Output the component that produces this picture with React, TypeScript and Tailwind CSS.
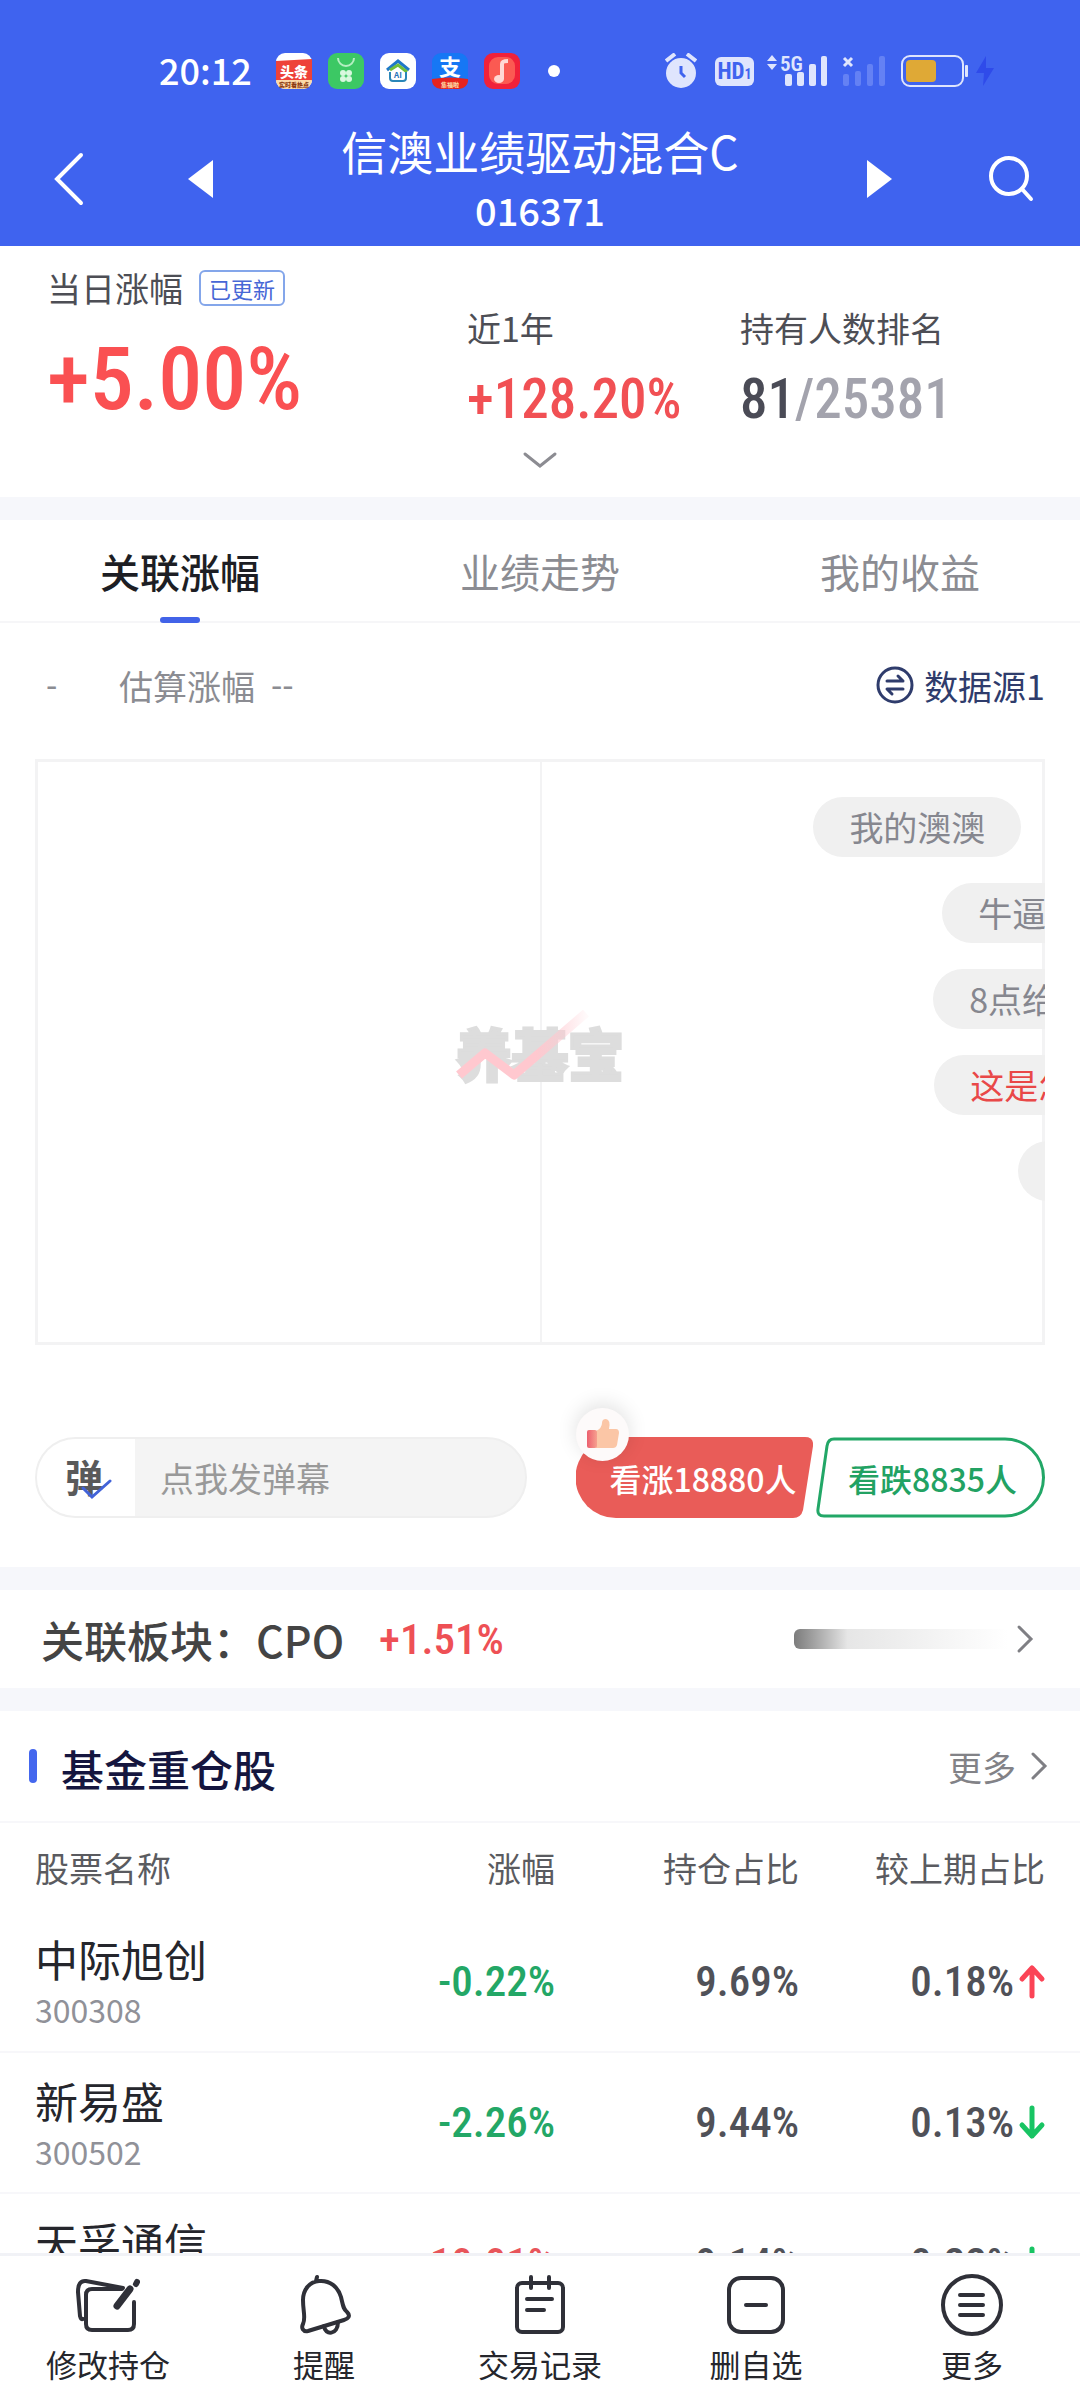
import React from 'react';

const NUM = "font-['Roboto_Condensed',Roboto,sans-serif] font-medium";

const STOCKS = [
  { name: '中际旭创', code: '300308', change: '-0.22%', ratio: '9.69%', diff: '0.18%', up: true },
  { name: '新易盛', code: '300502', change: '-2.26%', ratio: '9.44%', diff: '0.13%', up: false },
  { name: '天孚通信', code: '300394', change: '10.01%', ratio: '9.14%', diff: '0.22%', up: false },
];

// left is the bubble's current drift position, in percent of the chart width
const DANMAKU = [
  { text: '我的澳澳', left: 77 },
  { text: '牛逼', left: 89.8 },
  { text: '8点给我', left: 88.9 },
  { text: '这是怎么了', left: 89 },
  { text: '加油', left: 97.3 },
];

const Chevron = () => (
  <svg width="18" height="30" viewBox="0 0 18 30" fill="none" stroke="#7f7f84" strokeWidth="3" strokeLinecap="round">
    <path d="m3 3 12 12L3 27" />
  </svg>
);

const Arrow = ({ up }: { up: boolean }) => (
  <svg width="28" height="36" viewBox="0 0 28 36" fill="none" stroke={up ? '#fb4456' : '#18c463'} strokeWidth="5" strokeLinecap="round" strokeLinejoin="round">
    {up ? <path d="M14 33V5M4 16 14 5l10 11" /> : <path d="M14 3v28M4 20l10 11 10-11" />}
  </svg>
);

const StatusBar = () => (
  <div className="flex items-center justify-between pr-[84px] pl-[159px] pt-[53px]">
    <div className="flex h-9 items-center gap-4">
      <span className="mr-2 pb-1 text-[36px] leading-9 font-medium">20:12</span>
      <svg width="36" height="36" viewBox="0 0 36 36">
        <rect width="36" height="36" rx="9" fill="#fff" />
        <path d="M0 8 36 6v22H0z" fill="#ee4239" />
        <path d="M0 27h36a9 9 0 0 1-9 9H9a9 9 0 0 1-9-9z" fill="#fbd9a8" />
        <text x="18" y="24" fontSize="14" fontWeight="900" fill="#fff" textAnchor="middle">头条</text>
        <text x="18" y="34" fontSize="6" fontWeight="900" fill="#8c3a10" textAnchor="middle">实时看热点</text>
      </svg>
      <svg width="36" height="36" viewBox="0 0 36 36">
        <rect width="36" height="36" rx="9" fill="#3cc864" />
        <path d="M10 5a8 8 0 0 0 16 0" fill="none" stroke="#b4efc2" strokeWidth="2" />
        <g fill="#d8f8de">
          <circle cx="15" cy="20" r="3" />
          <circle cx="21" cy="20" r="3" />
          <circle cx="15" cy="26" r="3" />
          <circle cx="21" cy="26" r="3" />
        </g>
      </svg>
      <svg width="36" height="36" viewBox="0 0 36 36" fill="none">
        <rect width="36" height="36" rx="9" fill="#fff" />
        <path d="m7 17 11-9 11 9" stroke="#1f78c8" strokeWidth="3" />
        <path d="m10 17 8-5 9 7" stroke="#6fbf3b" strokeWidth="3" />
        <path d="M10 19v6q0 3 3 3h10q3 0 3-3v-6" stroke="#2a86b8" strokeWidth="2" />
        <text x="18" y="25" fontSize="8" fontWeight="700" fill="#2a72b8" textAnchor="middle">AI</text>
      </svg>
      <svg width="36" height="36" viewBox="0 0 36 36">
        <rect width="36" height="36" rx="9" fill="#1677f5" />
        <path d="M0 26q18-3 36 0a9 9 0 0 1-9 10H9a9 9 0 0 1-9-10z" fill="#e5231f" />
        <text x="18" y="22" fontSize="22" fontWeight="700" fill="#fff" textAnchor="middle">支</text>
        <text x="18" y="34" fontSize="6" fontWeight="700" fill="#ffe2b0" textAnchor="middle">集福啦</text>
      </svg>
      <svg width="36" height="36" viewBox="0 0 36 36">
        <rect width="36" height="36" rx="9" fill="#f0213a" />
        <rect x="5" y="4" width="26" height="27" rx="9" fill="#fb5a52" />
        <ellipse cx="15" cy="26" rx="5" ry="4" fill="#ffd8d4" />
        <path d="M18 26V11q0-3 6-3" fill="none" stroke="#ffd8d4" strokeWidth="4" />
      </svg>
      <span className="ml-3 size-3 rounded-full bg-white" />
    </div>
    <div className="flex items-center text-[#dfe5fd]">
      <svg width="32" height="36" viewBox="0 0 32 36">
        <circle cx="16" cy="20" r="15" fill="#dfe5fd" />
        <path d="m1 8 9-7M31 8l-9-7" stroke="#dfe5fd" strokeWidth="4" />
        <path d="M16 13v7l4 4" fill="none" stroke="#3f63ef" strokeWidth="3" />
      </svg>
      <span className="ml-[18px] w-[39px] rounded-md bg-[#dfe5fd] text-center font-['Roboto_Condensed',Roboto,sans-serif] text-[23px] leading-[29px] font-bold text-[#3f63ef]">
        HD<span className="text-sm">1</span>
      </span>
      <svg className="ml-3" width="62" height="36" viewBox="0 0 62 36" fill="#dfe5fd">
        <path d="m6 2 5 6H1zM6 17l5-6H1z" />
        <rect x="19" y="21" width="7" height="12" rx="2" />
        <rect x="31" y="19" width="7" height="14" rx="2" />
        <rect x="43" y="11" width="7" height="22" rx="2" />
        <rect x="55" y="3" width="6" height="30" rx="2" />
        <text x="14" y="18" fontSize="21" fontWeight="600" fontFamily="Roboto Condensed, Roboto">5G</text>
      </svg>
      <svg className="ml-[14px]" width="44" height="36" viewBox="0 0 44 36">
        <path d="m2 5 8 8m0-8-8 8" stroke="#dfe5fd" strokeWidth="3" />
        <g fill="#6481f4">
          <rect x="1" y="21" width="6" height="12" rx="2" />
          <rect x="13" y="18" width="6" height="15" rx="2" />
          <rect x="25" y="11" width="6" height="22" rx="2" />
          <rect x="37" y="3" width="6" height="30" rx="2" />
        </g>
      </svg>
      <svg className="ml-[14px]" width="96" height="36" viewBox="0 0 96 36">
        <rect x="2" y="3" width="61" height="30" rx="8" fill="none" stroke="#dfe5fd" strokeWidth="2" />
        <rect x="6" y="7" width="30" height="22" rx="4" fill="#dfa936" />
        <rect x="65" y="12" width="3" height="12" rx="1" fill="#dfe5fd" />
        <path d="M86 3 76 20h8l-1 13 11-18h-8z" fill="#2f4bea" />
      </svg>
    </div>
  </div>
);

const Header = () => (
  <header className="h-[246px] shrink-0 bg-[#3f63ef] text-white">
    <StatusBar />
    <div className="flex items-center justify-between px-[46px] pt-[31px]">
      <div className="flex items-center gap-[94px]">
        <button aria-label="返回">
          <svg width="46" height="60" viewBox="0 0 46 60" fill="none" stroke="#fff" strokeWidth="4" strokeLinecap="round">
            <path d="M35 5 11 29l24 24" />
          </svg>
        </button>
        <button aria-label="上一只">
          <svg width="30" height="40" viewBox="0 0 30 40" fill="#fff"><path d="M27 0v38L2 19z" /></svg>
        </button>
      </div>
      <div className="text-center">
        <h1 className="text-[46px] leading-[60px]">信澳业绩驱动混合C</h1>
        <p className="text-[38px] leading-[60px] font-medium">016371</p>
      </div>
      <div className="flex items-center gap-[94px]">
        <button aria-label="下一只">
          <svg width="30" height="40" viewBox="0 0 30 40" fill="#fff"><path d="M3 0v38l25-19z" /></svg>
        </button>
        <button aria-label="搜索">
          <svg width="46" height="60" viewBox="0 0 46 60" fill="none" stroke="#fff" strokeWidth="4" strokeLinecap="round">
            <circle cx="21" cy="26" r="18" />
            <path d="m34 39 9 10" />
          </svg>
        </button>
      </div>
    </div>
  </header>
);

const Summary = () => (
  <section className="relative flex h-[251px] shrink-0 pt-[19px] pl-[47px] text-[34px] leading-[46px] text-[#4d4e55]">
    <div className="w-[420px]">
      <div className="flex items-center gap-4">
        当日涨幅
        <span className="rounded-md border-2 border-[#84a6ea] px-2 text-[22px] leading-8 text-[#4767d6]">已更新</span>
      </div>
      <p className={`${NUM} mt-5 text-[88px] leading-[96px] text-[#fa5052]`}>+5.00%</p>
    </div>
    <div className="mt-10 w-[273px]">
      <p>近1年</p>
      <p className={`${NUM} mt-[18px] text-[55px] leading-[60px] text-[#f15054]`}>+128.20%</p>
    </div>
    <div className="mt-10">
      <p>持有人数排名</p>
      <p className={`${NUM} mt-[18px] text-[55px] leading-[60px] text-[#a3a3ad]`}>
        <span className="text-[#4a4b56]">81</span>/25381
      </p>
    </div>
    <button aria-label="展开" className="absolute bottom-[18px] left-1/2 -translate-x-1/2">
      <svg width="36" height="36" viewBox="0 0 36 36" fill="none" stroke="#8c8c92" strokeWidth="3" strokeLinecap="round">
        <path d="m3 11 15 12 15-12" />
      </svg>
    </button>
  </section>
);

const Tabs = () => (
  <nav className="grid h-[103px] shrink-0 grid-cols-3 border-b-2 border-[#f6f6f8] text-[40px]">
    {['关联涨幅', '业绩走势', '我的收益'].map((tab, i) => (
      <button key={tab} className={i === 0 ? 'relative font-medium text-[#1d1e24]' : 'text-[#8b8c92]'}>
        {tab}
        {i === 0 && <span className="absolute -bottom-[2px] left-1/2 h-[6px] w-10 -translate-x-1/2 rounded-full bg-[#4263e8]" />}
      </button>
    ))}
  </nav>
);

const SourceRow = () => (
  <div className="flex h-[136px] shrink-0 items-center px-[35px] pb-3 text-[34px] text-[#8b8c92]">
    <span className="ml-[11px] w-[73px] font-['Liberation_Sans']">-</span>
    <span>估算涨幅</span>
    <span className="ml-4 font-['Liberation_Sans']">--</span>
    <button className="ml-auto flex items-center gap-[10px] text-[#2f3c6c]">
      <svg width="38" height="38" viewBox="0 0 38 38" fill="none" stroke="#2f3c6c" strokeWidth="3" strokeLinecap="round" strokeLinejoin="round">
        <circle cx="19" cy="19" r="17" />
        <path d="M11 15h16l-5-5M27 23H11l5 5" />
      </svg>
      数据源1
    </button>
  </div>
);

const Watermark = () => (
  <div className="absolute inset-0 flex items-center justify-center">
    <div className="relative">
      <span className="text-[56px] font-black text-[#dddddd] [-webkit-text-stroke:3px_#dddddd]">养基宝</span>
      <svg className="absolute inset-0 size-full" viewBox="0 0 168 82" fill="none">
        <defs>
          <linearGradient id="trend" x1="0" x2="1">
            <stop offset="0.6" stopColor="#ffc8cf" />
            <stop offset="1" stopColor="#ffc8cf" stopOpacity="0.1" />
          </linearGradient>
        </defs>
        <path d="m3 64 26-22 29 22 72-62" stroke="url(#trend)" strokeWidth="9" strokeLinejoin="round" />
      </svg>
    </div>
  </div>
);

const Chart = () => (
  <div className="relative mx-[35px] h-[586px] shrink-0 border-[3px] border-[#f3f3f4]">
    <Watermark />
    <div className="grid h-full grid-cols-2">
      <div />
      <div className="border-l-2 border-[#f3f3f4]" />
    </div>
    <div className="absolute inset-y-0 -right-[3px] left-0 flex flex-col items-start gap-[26px] overflow-hidden pt-[35px]">
      {DANMAKU.map((d, i) => (
        <span
          key={d.text}
          style={{ marginLeft: `${d.left}%` }}
          className={`rounded-full bg-[#f0f0f0] px-9 text-[34px] leading-[60px] whitespace-nowrap ${i === 3 ? 'text-[#e94848]' : 'text-[#86878f]'}`}
        >
          {d.text}
        </span>
      ))}
    </div>
  </div>
);

const Vote = () => (
  <div className="mt-[92px] mb-[49px] flex h-[81px] shrink-0 items-stretch px-[35px]">
    <div className="flex flex-1 overflow-hidden rounded-full border-2 border-[#efefef] bg-[#f4f4f4]">
      <button aria-label="弹幕开关" className="relative w-[98px] bg-white pr-1 pb-1 text-[38px] font-bold text-[#5a5a5a]">
        弹
        <svg className="absolute top-10 left-11" width="32" height="24" viewBox="0 0 32 24" fill="none" stroke="#4263d8" strokeWidth="3" strokeLinecap="round">
          <path d="m2 9 9 9L29 2" />
        </svg>
      </button>
      <input aria-label="发弹幕" placeholder="点我发弹幕" className="w-0 flex-1 px-[25px] text-[34px] placeholder-[#999999] outline-none" />
    </div>
    <button className="relative ml-[49px] w-[237px] pl-[17px] text-[32px] font-medium text-white">
      <svg className="absolute inset-0" width="237" height="81" viewBox="0 0 237 81" fill="#e95c58">
        <path d="M40 0h189q9 0 8 9l-10 64q-2 8-10 8H40a40 40 0 0 1 0-81z" />
      </svg>
      <span className="relative">看涨18880人</span>
      <span className="absolute -top-[29px] left-0 flex size-[53px] items-center justify-center rounded-full bg-[#fdfafa] shadow-[0_-4px_20px_rgba(0,0,0,0.12)]">
        <svg width="32" height="32" viewBox="0 0 32 32">
          <defs>
            <linearGradient id="cuff" x1="0" x2="1">
              <stop offset="0" stopColor="#ec5f6e" />
              <stop offset="1" stopColor="#f6a08f" />
            </linearGradient>
          </defs>
          <path d="M9 12q6-3 6-8 0-4 4-4 5 1 3 10h7q3 0 3 4l-2 12q-1 3-4 3H9z" fill="#fbc6a6" />
          <rect x="0" y="11" width="10" height="18" rx="2" fill="url(#cuff)" />
        </svg>
      </span>
    </button>
    <button className="relative ml-[3px] w-[229px] pl-1 text-[32px] font-medium text-[#22a263]">
      <svg className="absolute inset-0" width="229" height="81" viewBox="0 0 229 81" fill="none" stroke="#22a767" strokeWidth="3">
        <path d="M18 2h171a38 38 0 0 1 0 77H8q-7 0-6-7L11 9q1-7 7-7z" />
      </svg>
      <span className="relative">看跌8835人</span>
    </button>
  </div>
);

const Sector = () => (
  <a href="#sector" className="flex h-[98px] shrink-0 items-center pr-[46px] pl-[41px]">
    <span className="text-[43px] font-medium text-[#444444]">关联板块：CPO</span>
    <span className={`${NUM} ml-[35px] text-[43px] text-[#ee5055]`}>+1.51%</span>
    <span className="mr-2 ml-auto h-5 w-[214px] rounded-l-md bg-linear-to-r from-[#7c7c7c] via-[#e6e6e6] via-25% to-white" />
    <Chevron />
  </a>
);

const Holdings = () => (
  <section className="shrink-0">
    <div className="flex h-[112px] items-center border-b-2 border-[#f7f7fa] pr-8 pl-[29px]">
      <span className="h-[34px] w-2 rounded-full bg-[#4467ee]" />
      <h2 className="ml-6 pt-1 text-[43px] font-medium text-[#15163f]">基金重仓股</h2>
      <a href="#more" className="ml-auto flex items-center gap-[14px] text-[34px] text-[#828287]">
        更多
        <Chevron />
      </a>
    </div>
    <table className="w-full text-right">
      <thead className="text-[34px] text-[#5a5b60]">
        <tr className="h-[88px]">
          <th className="pl-[35px] text-left font-normal">股票名称</th>
          <th className="w-[230px] font-normal">涨幅</th>
          <th className="w-[244px] font-normal">持仓占比</th>
          <th className="w-[281px] pr-[35px] font-normal">较上期占比</th>
        </tr>
      </thead>
      <tbody>
        {STOCKS.map((s) => (
          <tr key={s.code} className="h-[141px] border-b-2 border-[#f7f7fa]">
            <td className="pl-[35px] text-left">
              <p className="text-[43px] leading-[56px] text-[#25262c]">{s.name}</p>
              <p className="text-[32px] leading-[46px] text-[#909198]">{s.code}</p>
            </td>
            <td className={`${NUM} text-[43px] ${s.change.startsWith('-') ? 'text-[#23a766]' : 'text-[#e8555a]'}`}>{s.change}</td>
            <td className={`${NUM} text-[43px] text-[#505158]`}>{s.ratio}</td>
            <td className={`${NUM} pr-[34px] text-[43px] text-[#505158]`}>
              <span className="flex items-center justify-end gap-1">
                {s.diff}
                <Arrow up={s.up} />
              </span>
            </td>
          </tr>
        ))}
      </tbody>
    </table>
  </section>
);

const NAV = [
  {
    label: '修改持仓',
    icon: (
      <>
        <path d="M46 17H16q-6 0-6 6v29q0 6 6 6h36q6 0 6-6V30" />
        <path d="M7 47q-2 1-3-3L2 20Q2 8 10 9l37 7" />
        <path d="M54 17 41 34" strokeWidth="7" />
        <path d="m60 12 1-2" strokeWidth="6" />
      </>
    ),
  },
  {
    label: '提醒',
    icon: (
      <>
        <path d="m24 9 1-4M11 28c0-10 6-18 16-19 11-1 19 6 22 16 2 8 2 12 6 15 4 4 1 7-3 8L16 59c-5 1-7-3-5-7 3-6 0-12 0-24z" />
        <path d="M32 54c1 10 14 9 14-4" />
      </>
    ),
  },
  {
    label: '交易记录',
    icon: (
      <>
        <rect x="9" y="11" width="46" height="49" rx="5" />
        <path d="M23 5v11M41 5v11M19 27h25M19 38h17" />
      </>
    ),
  },
  {
    label: '删自选',
    icon: (
      <>
        <rect x="5" y="6" width="54" height="54" rx="12" />
        <path d="M22 33h20" />
      </>
    ),
  },
  {
    label: '更多',
    icon: (
      <>
        <circle cx="32" cy="33" r="29" />
        <path d="M20 23h23M20 33h23M20 43h23" />
      </>
    ),
  },
];

const BottomNav = () => (
  <nav className="grid h-[147px] shrink-0 grid-cols-5 border-t-[3px] border-[#f1f2f6] bg-white">
    {NAV.map((item) => (
      <button key={item.label} className="flex flex-col items-center pt-4 text-[31px] leading-10 text-[#25262c]">
        <svg width="64" height="64" viewBox="0 0 64 64" fill="none" stroke="#2f3038" strokeWidth="4" strokeLinecap="round" strokeLinejoin="round">
          {item.icon}
        </svg>
        <span className="mt-2">{item.label}</span>
      </button>
    ))}
  </nav>
);

const Band = () => <div className="h-[23px] shrink-0 bg-[#f6f7fb]" />;

export default function App() {
  return (
    <div className="flex h-screen flex-col bg-white font-['Noto_Sans_CJK_SC',sans-serif]">
      <Header />
      <main className="flex min-h-0 flex-1 flex-col overflow-hidden">
        <Summary />
        <Band />
        <Tabs />
        <SourceRow />
        <Chart />
        <Vote />
        <Band />
        <Sector />
        <Band />
        <Holdings />
      </main>
      <BottomNav />
    </div>
  );
}
